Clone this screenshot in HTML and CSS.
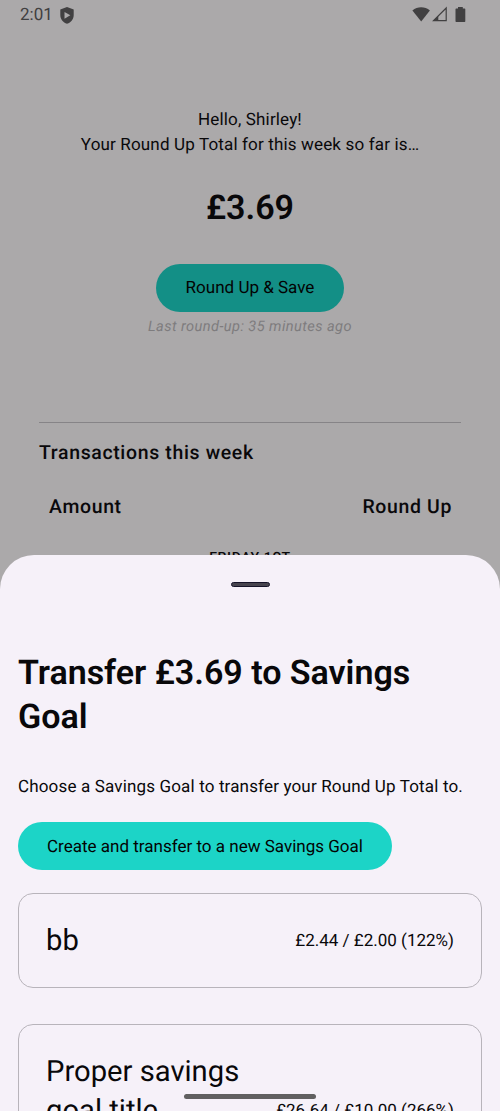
FILE: index.html
```html
<!DOCTYPE html>
<html lang="en">
<head>
<meta charset="utf-8">
<meta name="viewport" content="width=device-width, initial-scale=1">
<title>Round Up</title>
<link rel="stylesheet" href="styles.css">
</head>
<body>
<div class="screen">
  <header class="status">
    <div class="status-left">
      <span class="clock">2:01</span>
      <svg class="shield" viewBox="0 0 14 17" width="14" height="17"><path fill="#414041" d="M7 0 13.7 2.6V8C13.7 12.2 11 15.6 7 16.8 3 15.6.3 12.2.3 8V2.6Z"/><path fill="#aba9aa" d="M4.5 4.9 10.3 8.3 4.5 11.7Z"/></svg>
    </div>
    <svg class="indicators" viewBox="0 0 56 18" width="56" height="18"><path fill="#414041" d="M.4 4.5C5.4.3 12.9.3 17.9 4.5L9.2 15.6Z"/><path fill="none" stroke="#414041" stroke-width="1.2" d="M21.5 14.7H34.2V2Z"/><path fill="#414041" d="M21 15 26.3 9.8V15ZM44.2 2.4H46V1H50.8V2.4H52.6Q53.3 2.4 53.3 3.2V15.2Q53.3 16 52.6 16H44.2Q43.5 16 43.5 15.2V3.2Q43.5 2.4 44.2 2.4Z"/></svg>
  </header>
  <main class="home">
    <p class="greeting">Hello, Shirley!<br>Your Round Up Total for this week so far is…</p>
    <p class="total">£3.69</p>
    <button class="pill pill-dimmed">Round Up &amp; Save</button>
    <p class="last">Last round-up: 35 minutes ago</p>
    <section class="transactions">
      <h2 class="section-title">Transactions this week</h2>
      <div class="columns"><span>Amount</span><span>Round Up</span></div>
      <p class="day">FRIDAY 1ST</p>
    </section>
  </main>
  <section class="sheet">
    <div class="handle"></div>
    <h1 class="sheet-title">Transfer £3.69 to Savings Goal</h1>
    <p class="hint">Choose a Savings Goal to transfer your Round Up Total to.</p>
    <button class="pill pill-create">Create and transfer to a new Savings Goal</button>
    <div class="goals">
      <article class="goal"><h3 class="goal-name">bb</h3><span class="goal-amount">£2.44 / £2.00 (122%)</span></article>
      <article class="goal goal-tall"><h3 class="goal-name">Proper savings goal title</h3><span class="goal-amount">£26.64 / £10.00 (266%)</span></article>
    </div>
  </section>
  <div class="nav-bar"></div>
</div>
</body>
</html>
```

FILE: styles.css
```css
* { box-sizing: border-box; }
body { margin: 0; font-family: Roboto, sans-serif; font-weight: 400; color: #09080a; text-rendering: geometricPrecision; }
p, h1, h2, h3 { margin: 0; }
.screen { position: relative; display: flex; flex-direction: column; width: 500px; height: 1111px; overflow: hidden; background: #aba9aa; }
.status { display: flex; justify-content: space-between; height: 29px; padding: 6px 32px 0 20px; }
.status-left { display: flex; height: 18px; align-items: center; gap: 7px; color: #414041; }
.clock { font-size: 17px; line-height: 20px; letter-spacing: 0; }
.home { display: flex; flex-direction: column; align-items: center; height: 526px; padding: 79px 39px 0; overflow: hidden; }
.greeting { font-size: 17.03px; line-height: 24.5px; letter-spacing: .15px; text-align: center; }
.total { margin-top: 29px; font-size: 34.06px; line-height: 44px; font-weight: 600; }
.pill { height: 48px; flex: none; padding: 0 29px; border: 0; border-radius: 24px; font: 450 17.03px/24px Roboto, sans-serif; letter-spacing: 0; color: #030303; white-space: nowrap; text-rendering: geometricPrecision; }
.pill-dimmed { width: 188px; margin-top: 34px; background: #138f86; }
.last { margin-top: 4px; font-size: 14.6px; line-height: 20px; letter-spacing: .42px; font-style: italic; color: #7e7c7e; }
.transactions { align-self: stretch; margin-top: 86px; border-top: 1px solid #868487; font-weight: 500; }
.section-title { margin-top: 15px; font-size: 19.46px; line-height: 29px; font-weight: 500; letter-spacing: .66px; }
.columns { display: flex; justify-content: space-between; margin-top: 25px; padding: 0 9px 0 10px; font-size: 19.46px; line-height: 29px; letter-spacing: .66px; }
.day { margin-top: 27px; font-size: 14.1px; line-height: 20px; letter-spacing: .6px; text-align: center; }
.sheet { flex: 1; display: flex; flex-direction: column; min-height: 0; padding: 27px 18px 0; border-radius: 34px 34px 0 0; background: #f6f1f9; }
.handle { align-self: center; flex: none; width: 39px; height: 5px; border: 1px solid #171429; border-radius: 3px; background: #47444e; }
.sheet-title { margin-top: 64px; font-size: 34.06px; line-height: 44px; font-weight: 600; letter-spacing: -.03px; }
.hint { margin-top: 36px; font-size: 17.03px; line-height: 24px; letter-spacing: .15px; white-space: nowrap; }
.pill-create { align-self: flex-start; width: 374px; margin-top: 23px; padding-top: 1px; background: #1cd4c7; }
.goals { display: flex; flex-direction: column; gap: 36px; margin-top: 23px; }
.goal { display: flex; align-items: center; justify-content: space-between; height: 95px; padding: 28px 27px 26px; border: 1px solid #b8b4bb; border-radius: 15px; }
.goal-tall { height: 173px; }
.goal-tall .goal-name { align-self: flex-start; }
.goal-name { max-width: 205px; font-size: 29.2px; line-height: 39px; font-weight: 400; }
.goal-amount { margin-top: -1px; font-size: 17.03px; line-height: 24px; white-space: nowrap; }
.nav-bar { position: absolute; left: 184px; bottom: 12px; width: 132px; height: 5px; border-radius: 3px; background: #616061; }
```
